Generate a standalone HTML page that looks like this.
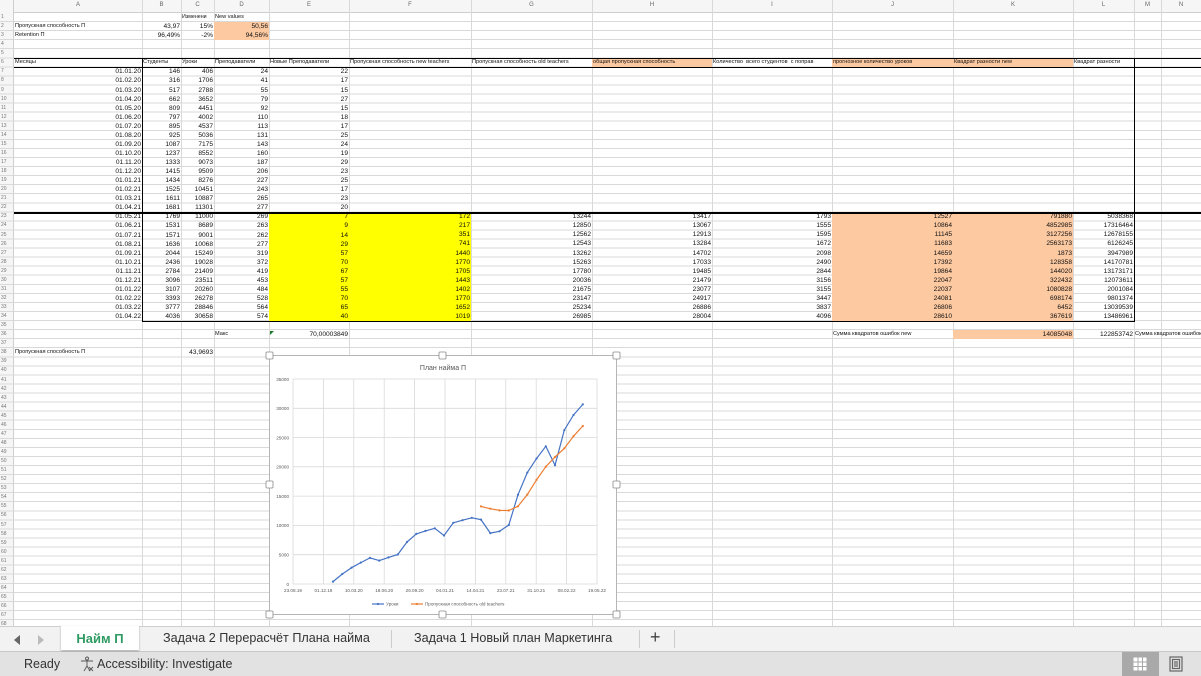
<!DOCTYPE html>
<html><head><meta charset="utf-8">
<style>
*{margin:0;padding:0;box-sizing:border-box}
body{width:1201px;height:676px;overflow:hidden;background:#fff;position:relative;font-family:"Liberation Sans",sans-serif;color:#111}
.ab{position:absolute}
.grid{position:absolute;left:0;top:13px;width:1201px;height:613px;background:repeating-linear-gradient(to bottom,transparent 0,transparent 8.06px,#d9d9d9 8.06px,#d9d9d9 9.06px)}
.v{position:absolute;top:0;width:1px;height:626px;background:#d9d9d9}
.col{position:absolute;font-size:6.6px;line-height:9.06px;text-align:right;white-space:nowrap;padding-right:1px}
.t{position:absolute;font-size:5.6px;line-height:9.06px;white-space:nowrap;padding-left:1px}
.hl{position:absolute;font-size:6px;color:#666;top:2px;text-align:center}
.bk{position:absolute;background:#000}
.o{position:absolute;background:#fcc9a1}
.y{position:absolute;background:#ffff00}
</style></head><body>
<!-- header bar -->
<div class="ab" style="left:0;top:0;width:1201px;height:13px;background:#f6f6f6;border-bottom:1px solid #cfcfcf"></div>
<div class="ab" style="left:0;top:0;width:14px;height:626px;background:#f6f6f6;border-right:1px solid #cfcfcf"></div>
<div class="grid"></div>
<div class="v" style="left:142px"></div><div class="v" style="left:181px"></div><div class="v" style="left:214px"></div><div class="v" style="left:269px"></div><div class="v" style="left:349px"></div><div class="v" style="left:471px"></div><div class="v" style="left:592px"></div><div class="v" style="left:712px"></div><div class="v" style="left:832px"></div><div class="v" style="left:953px"></div><div class="v" style="left:1073px"></div><div class="v" style="left:1134px"></div><div class="v" style="left:1161px"></div>
<div class="hl" style="left:14px;width:128px">A</div><div class="hl" style="left:142px;width:39px">B</div><div class="hl" style="left:181px;width:33px">C</div><div class="hl" style="left:214px;width:55px">D</div><div class="hl" style="left:269px;width:80px">E</div><div class="hl" style="left:349px;width:122px">F</div><div class="hl" style="left:471px;width:121px">G</div><div class="hl" style="left:592px;width:120px">H</div><div class="hl" style="left:712px;width:120px">I</div><div class="hl" style="left:832px;width:121px">J</div><div class="hl" style="left:953px;width:120px">K</div><div class="hl" style="left:1073px;width:61px">L</div><div class="hl" style="left:1134px;width:27px">M</div><div class="hl" style="left:1161px;width:40px">N</div>
<div class="ab" style="left:1px;top:13px;width:12px;font-size:5px;line-height:9.06px;color:#777;text-align:left">1<br>2<br>3<br>4<br>5<br>6<br>7<br>8<br>9<br>10<br>11<br>12<br>13<br>14<br>15<br>16<br>17<br>18<br>19<br>20<br>21<br>22<br>23<br>24<br>25<br>26<br>27<br>28<br>29<br>30<br>31<br>32<br>33<br>34<br>35<br>36<br>37<br>38<br>39<br>40<br>41<br>42<br>43<br>44<br>45<br>46<br>47<br>48<br>49<br>50<br>51<br>52<br>53<br>54<br>55<br>56<br>57<br>58<br>59<br>60<br>61<br>62<br>63<br>64<br>65<br>66<br>67<br>68</div>

<!-- fills -->
<div class="o" style="left:214px;top:22px;width:55px;height:18px"></div>
<div class="o" style="left:592px;top:58.5px;width:120px;height:9px"></div>
<div class="o" style="left:832px;top:58.5px;width:241px;height:9px"></div>
<div class="y" style="left:269px;top:212.5px;width:202px;height:108.5px"></div>
<div class="o" style="left:832px;top:212.5px;width:241px;height:108.5px"></div>
<div class="o" style="left:953px;top:330px;width:120px;height:8.5px"></div>

<!-- top rows -->
<div class="t" style="left:181px;top:13px;font-size:5.3px">Изменени</div>
<div class="t" style="left:214px;top:13px">New values</div>
<div class="t" style="left:14px;top:22.1px">Пропускная способность П</div>
<div class="t" style="left:14px;top:31.1px">Retention П</div>
<div class="col" style="left:142px;width:39px;top:22.1px">43,97<br>96,49%</div>
<div class="col" style="left:181px;width:33px;top:22.1px">15%<br>-2%</div>
<div class="col" style="left:214px;width:55px;top:22.1px">50,56<br>94,56%</div>

<!-- row 6 headers -->
<div class="t" style="left:14px;top:58.3px">Месяцы</div>
<div class="t" style="left:142px;top:58.3px">Студенты</div>
<div class="t" style="left:181px;top:58.3px">Уроки</div>
<div class="t" style="left:214px;top:58.3px">Преподаватели</div>
<div class="t" style="left:269px;top:58.3px">Новые Преподаватели</div>
<div class="t" style="left:349px;top:58.3px">Пропускная способность new teachers</div>
<div class="t" style="left:471px;top:58.3px">Пропускная способность old teachers</div>
<div class="t" style="left:592px;top:58.3px">общая пропускная способность</div>
<div class="t" style="left:712px;top:58.3px;width:120px;overflow:hidden">Количество &nbsp;всего студентов &nbsp;с поправ</div>
<div class="t" style="left:832px;top:58.3px">прогнозное количество уроков</div>
<div class="t" style="left:953px;top:58.3px">Квадрат разности new</div>
<div class="t" style="left:1073px;top:58.3px">Квадрат разности</div>

<!-- data -->
<div class="col" style="left:14px;width:128px;top:67.4px">01.01.20<br>01.02.20<br>01.03.20<br>01.04.20<br>01.05.20<br>01.06.20<br>01.07.20<br>01.08.20<br>01.09.20<br>01.10.20<br>01.11.20<br>01.12.20<br>01.01.21<br>01.02.21<br>01.03.21<br>01.04.21<br>01.05.21<br>01.06.21<br>01.07.21<br>01.08.21<br>01.09.21<br>01.10.21<br>01.11.21<br>01.12.21<br>01.01.22<br>01.02.22<br>01.03.22<br>01.04.22</div>
<div class="col" style="left:142px;width:39px;top:67.4px">146<br>316<br>517<br>662<br>809<br>797<br>895<br>925<br>1087<br>1237<br>1333<br>1415<br>1434<br>1525<br>1611<br>1681<br>1769<br>1531<br>1571<br>1636<br>2044<br>2436<br>2784<br>3096<br>3107<br>3393<br>3777<br>4036</div>
<div class="col" style="left:181px;width:33px;top:67.4px">406<br>1706<br>2788<br>3652<br>4451<br>4002<br>4537<br>5036<br>7175<br>8552<br>9073<br>9509<br>8276<br>10451<br>10887<br>11301<br>11000<br>8689<br>9001<br>10068<br>15249<br>19028<br>21409<br>23511<br>20260<br>26278<br>28846<br>30658</div>
<div class="col" style="left:214px;width:55px;top:67.4px">24<br>41<br>55<br>79<br>92<br>110<br>113<br>131<br>143<br>160<br>187<br>206<br>227<br>243<br>265<br>277<br>269<br>263<br>262<br>277<br>319<br>372<br>419<br>453<br>484<br>528<br>564<br>574</div>
<div class="col" style="left:269px;width:80px;top:67.4px">22<br>17<br>15<br>27<br>15<br>18<br>17<br>25<br>24<br>19<br>29<br>23<br>25<br>17<br>23<br>20<br>7<br>9<br>14<br>29<br>57<br>70<br>67<br>57<br>55<br>70<br>65<br>40</div>
<div class="col" style="left:349px;width:122px;top:212.3px">172<br>217<br>351<br>741<br>1440<br>1770<br>1705<br>1443<br>1402<br>1770<br>1652<br>1019</div>
<div class="col" style="left:471px;width:121px;top:212.3px">13244<br>12850<br>12562<br>12543<br>13262<br>15263<br>17780<br>20036<br>21675<br>23147<br>25234<br>26985</div>
<div class="col" style="left:592px;width:120px;top:212.3px">13417<br>13067<br>12913<br>13284<br>14702<br>17033<br>19485<br>21479<br>23077<br>24917<br>26886<br>28004</div>
<div class="col" style="left:712px;width:120px;top:212.3px">1793<br>1555<br>1595<br>1672<br>2098<br>2490<br>2844<br>3156<br>3155<br>3447<br>3837<br>4096</div>
<div class="col" style="left:832px;width:121px;top:212.3px">12527<br>10864<br>11145<br>11683<br>14659<br>17392<br>19864<br>22047<br>22037<br>24081<br>26806<br>28610</div>
<div class="col" style="left:953px;width:120px;top:212.3px">791880<br>4852985<br>3127256<br>2563173<br>1873<br>128358<br>144020<br>322432<br>1080828<br>698174<br>6452<br>367619</div>
<div class="col" style="left:1073px;width:61px;top:212.3px">5038368<br>17316464<br>12678155<br>6126245<br>3947989<br>14170781<br>13173171<br>12073611<br>2001084<br>9801374<br>13039539<br>13486961</div>

<!-- row 36 / 38 -->
<div class="t" style="left:214px;top:330.1px">Макс</div>
<div class="ab" style="left:270px;top:330.5px;width:0;height:0;border-top:4px solid #1a7a2a;border-right:4px solid transparent"></div>
<div class="col" style="left:269px;width:80px;top:330.1px">70,00003849</div>
<div class="t" style="left:832px;top:330.1px">Сумма квадратов ошибок new</div>
<div class="col" style="left:953px;width:120px;top:330.1px">14085048</div>
<div class="col" style="left:1073px;width:61px;top:330.1px">122853742</div>
<div class="t" style="left:1134px;top:330.1px;width:67px;overflow:hidden">Сумма квадратов ошибок</div>
<div class="t" style="left:14px;top:348.2px">Пропускная способность П</div>
<div class="col" style="left:181px;width:33px;top:348.2px">43,9693</div>

<!-- borders -->
<div class="bk" style="left:14px;top:58px;width:1187px;height:1px"></div>
<div class="bk" style="left:14px;top:66.8px;width:1187px;height:1px"></div>
<div class="bk" style="left:14px;top:211.8px;width:1187px;height:2px"></div>
<div class="bk" style="left:142px;top:320.6px;width:993px;height:1px"></div>
<div class="bk" style="left:142px;top:58px;width:1px;height:263px"></div>
<div class="bk" style="left:1134px;top:58px;width:1px;height:263px"></div>

<!-- chart -->
<svg class="ab" style="left:264px;top:350px" width="358" height="270" viewBox="264 350 358 270">
<rect x="269.5" y="355.5" width="347" height="259" fill="#fff" stroke="#b5b5b5"/>
<g stroke="#d9d9d9" stroke-width="0.8">
<line x1="293" y1="584" x2="597" y2="584"/><line x1="293" y1="554.7" x2="597" y2="554.7"/><line x1="293" y1="525.4" x2="597" y2="525.4"/><line x1="293" y1="496.1" x2="597" y2="496.1"/><line x1="293" y1="466.8" x2="597" y2="466.8"/><line x1="293" y1="437.5" x2="597" y2="437.5"/><line x1="293" y1="408.3" x2="597" y2="408.3"/><line x1="293" y1="379" x2="597" y2="379"/>
<line x1="293" y1="379" x2="293" y2="584"/><line x1="323.4" y1="379" x2="323.4" y2="584"/><line x1="353.8" y1="379" x2="353.8" y2="584"/><line x1="384.2" y1="379" x2="384.2" y2="584"/><line x1="414.6" y1="379" x2="414.6" y2="584"/><line x1="445" y1="379" x2="445" y2="584"/><line x1="475.4" y1="379" x2="475.4" y2="584"/><line x1="505.8" y1="379" x2="505.8" y2="584"/><line x1="536.2" y1="379" x2="536.2" y2="584"/><line x1="566.6" y1="379" x2="566.6" y2="584"/><line x1="597" y1="379" x2="597" y2="584"/>
</g>
<text x="443" y="370" font-size="7" fill="#595959" text-anchor="middle" font-family="Liberation Sans">План найма П</text>
<g font-size="4.6" fill="#595959" text-anchor="end" font-family="Liberation Sans">
<text x="289" y="586">0</text><text x="289" y="556.5">5000</text><text x="289" y="527.2">10000</text><text x="289" y="498">15000</text><text x="289" y="468.6">20000</text><text x="289" y="439.3">25000</text><text x="289" y="410">30000</text><text x="289" y="380.8">35000</text>
</g>
<g font-size="4.6" fill="#595959" text-anchor="middle" font-family="Liberation Sans">
<text x="293" y="592">23.08.19</text><text x="323.4" y="592">01.12.19</text><text x="353.8" y="592">10.03.20</text><text x="384.2" y="592">18.06.20</text><text x="414.6" y="592">26.09.20</text><text x="445" y="592">04.01.21</text><text x="475.4" y="592">14.04.21</text><text x="505.8" y="592">23.07.21</text><text x="536.2" y="592">31.10.21</text><text x="566.6" y="592">08.02.22</text><text x="597" y="592">19.05.22</text>
</g>
<polyline fill="none" stroke="#4472c4" stroke-width="1.2" stroke-linejoin="round" points="333,581.6 342.3,574 351.5,567.7 360.8,562.6 370,557.9 379.3,560.6 388.5,557.4 397.8,554.5 407,542 416.3,533.9 425.5,530.9 434.8,528.3 444,535.5 453.3,522.8 462.5,520.2 471.8,517.8 481,519.6 490.3,533.1 499.5,531.3 508.8,525 518,494.7 527.3,472.6 536.5,458.6 545.8,446.3 555,465.3 564.3,430.1 573.5,415 582.8,404.4"/>
<g fill="#4472c4"><circle cx="333" cy="581.6" r="1.1"/><circle cx="342.3" cy="574" r="1.1"/><circle cx="351.5" cy="567.7" r="1.1"/><circle cx="360.8" cy="562.6" r="1.1"/><circle cx="370" cy="557.9" r="1.1"/><circle cx="379.3" cy="560.6" r="1.1"/><circle cx="388.5" cy="557.4" r="1.1"/><circle cx="397.8" cy="554.5" r="1.1"/><circle cx="407" cy="542" r="1.1"/><circle cx="416.3" cy="533.9" r="1.1"/><circle cx="425.5" cy="530.9" r="1.1"/><circle cx="434.8" cy="528.3" r="1.1"/><circle cx="444" cy="535.5" r="1.1"/><circle cx="453.3" cy="522.8" r="1.1"/><circle cx="462.5" cy="520.2" r="1.1"/><circle cx="471.8" cy="517.8" r="1.1"/><circle cx="481" cy="519.6" r="1.1"/><circle cx="490.3" cy="533.1" r="1.1"/><circle cx="499.5" cy="531.3" r="1.1"/><circle cx="508.8" cy="525" r="1.1"/><circle cx="518" cy="494.7" r="1.1"/><circle cx="527.3" cy="472.6" r="1.1"/><circle cx="536.5" cy="458.6" r="1.1"/><circle cx="545.8" cy="446.3" r="1.1"/><circle cx="555" cy="465.3" r="1.1"/><circle cx="564.3" cy="430.1" r="1.1"/><circle cx="573.5" cy="415" r="1.1"/><circle cx="582.8" cy="404.4" r="1.1"/></g>
<polyline fill="none" stroke="#ed7d31" stroke-width="1.2" stroke-linejoin="round" points="481,506.4 490.3,508.7 499.5,510.4 508.8,510.5 518,506.3 527.3,494.6 536.5,479.9 545.8,466.7 555,457 564.3,448.4 573.5,436.2 582.8,426"/>
<g fill="#ed7d31"><circle cx="481" cy="506.4" r="1.1"/><circle cx="490.3" cy="508.7" r="1.1"/><circle cx="499.5" cy="510.4" r="1.1"/><circle cx="508.8" cy="510.5" r="1.1"/><circle cx="518" cy="506.3" r="1.1"/><circle cx="527.3" cy="494.6" r="1.1"/><circle cx="536.5" cy="479.9" r="1.1"/><circle cx="545.8" cy="466.7" r="1.1"/><circle cx="555" cy="457" r="1.1"/><circle cx="564.3" cy="448.4" r="1.1"/><circle cx="573.5" cy="436.2" r="1.1"/><circle cx="582.8" cy="426" r="1.1"/></g>
<line x1="372" y1="604" x2="384" y2="604" stroke="#4472c4" stroke-width="1.2"/><circle cx="378" cy="604" r="1.1" fill="#4472c4"/>
<text x="386" y="605.6" font-size="4.6" fill="#595959" font-family="Liberation Sans">Уроки</text>
<line x1="411" y1="604" x2="423" y2="604" stroke="#ed7d31" stroke-width="1.2"/><circle cx="417" cy="604" r="1.1" fill="#ed7d31"/>
<text x="425" y="605.6" font-size="4.6" fill="#595959" font-family="Liberation Sans">Пропускная способность old teachers</text>
<g fill="#fff" stroke="#8a8a8a" stroke-width="0.8">
<rect x="266" y="352" width="7" height="7" rx="1"/><rect x="439" y="352" width="7" height="7" rx="1"/><rect x="613" y="352" width="7" height="7" rx="1"/>
<rect x="266" y="481" width="7" height="7" rx="1"/><rect x="613" y="481" width="7" height="7" rx="1"/>
<rect x="266" y="611" width="7" height="7" rx="1"/><rect x="439" y="611" width="7" height="7" rx="1"/><rect x="613" y="611" width="7" height="7" rx="1"/>
</g>
</svg>

<!-- tab bar -->
<div class="ab" style="left:0;top:626px;width:1201px;height:26px;background:#f2f2f2;border-top:1px solid #cfcfcf;border-bottom:1px solid #c8c8c8"></div>
<div class="ab" style="left:14px;top:635px;width:0;height:0;border-top:5px solid transparent;border-bottom:5px solid transparent;border-right:6px solid #666"></div>
<div class="ab" style="left:38px;top:635px;width:0;height:0;border-top:5px solid transparent;border-bottom:5px solid transparent;border-left:6px solid #bbb"></div>
<div class="ab" style="left:61px;top:626px;width:78px;height:24px;background:#fff;box-shadow:0 1px 2px rgba(0,0,0,.3)"></div>
<div class="ab" style="left:61px;top:631px;width:78px;text-align:center;font-size:13px;font-weight:bold;color:#2e9b63">Найм П</div>
<div class="ab" style="left:163px;top:631px;font-size:12.6px;color:#333">Задача 2 Перерасчёт Плана найма</div>
<div class="ab" style="left:391px;top:630px;width:1px;height:18px;background:#ccc"></div>
<div class="ab" style="left:414px;top:631px;font-size:12.6px;color:#333">Задача 1 Новый план Маркетинга</div>
<div class="ab" style="left:639px;top:630px;width:1px;height:18px;background:#ccc"></div>
<div class="ab" style="left:650px;top:627px;font-size:18px;color:#444">+</div>
<div class="ab" style="left:674px;top:630px;width:1px;height:18px;background:#ccc"></div>

<!-- status bar -->
<div class="ab" style="left:0;top:652px;width:1201px;height:24px;background:#e2e2e2"></div>
<div class="ab" style="left:24px;top:657px;font-size:12.5px;color:#333">Ready</div>
<svg class="ab" style="left:79px;top:656px" width="16" height="16" viewBox="0 0 16 16" fill="none" stroke="#555" stroke-width="0.9"><circle cx="8" cy="2.5" r="1.5"/><path d="M2 5 L14 5 M8 5 L8 10 M5 15 L8 10 L11 15"/><path d="M10 11 L14 15 M14 11 L10 15"/></svg>
<div class="ab" style="left:97px;top:657px;font-size:12.5px;color:#333">Accessibility: Investigate</div>
<div class="ab" style="left:1122px;top:652px;width:37px;height:24px;background:#a9a9a9"></div>
<svg class="ab" style="left:1133px;top:657px" width="14" height="14" viewBox="0 0 14 14"><rect x="0.5" y="0.5" width="13" height="13" fill="#fff"/><g stroke="#a9a9a9" stroke-width="1"><line x1="5" y1="0" x2="5" y2="14"/><line x1="9.5" y1="0" x2="9.5" y2="14"/><line x1="0" y1="5" x2="14" y2="5"/><line x1="0" y1="9.5" x2="14" y2="9.5"/></g></svg>
<svg class="ab" style="left:1169px;top:656px" width="14" height="16" viewBox="0 0 14 16" fill="none" stroke="#666" stroke-width="1.2"><rect x="1" y="1" width="12" height="14"/><rect x="3.5" y="3.5" width="7" height="9"/><line x1="5" y1="6" x2="9" y2="6"/><line x1="5" y1="8" x2="9" y2="8"/><line x1="5" y1="10" x2="9" y2="10"/></svg>
</body></html>
